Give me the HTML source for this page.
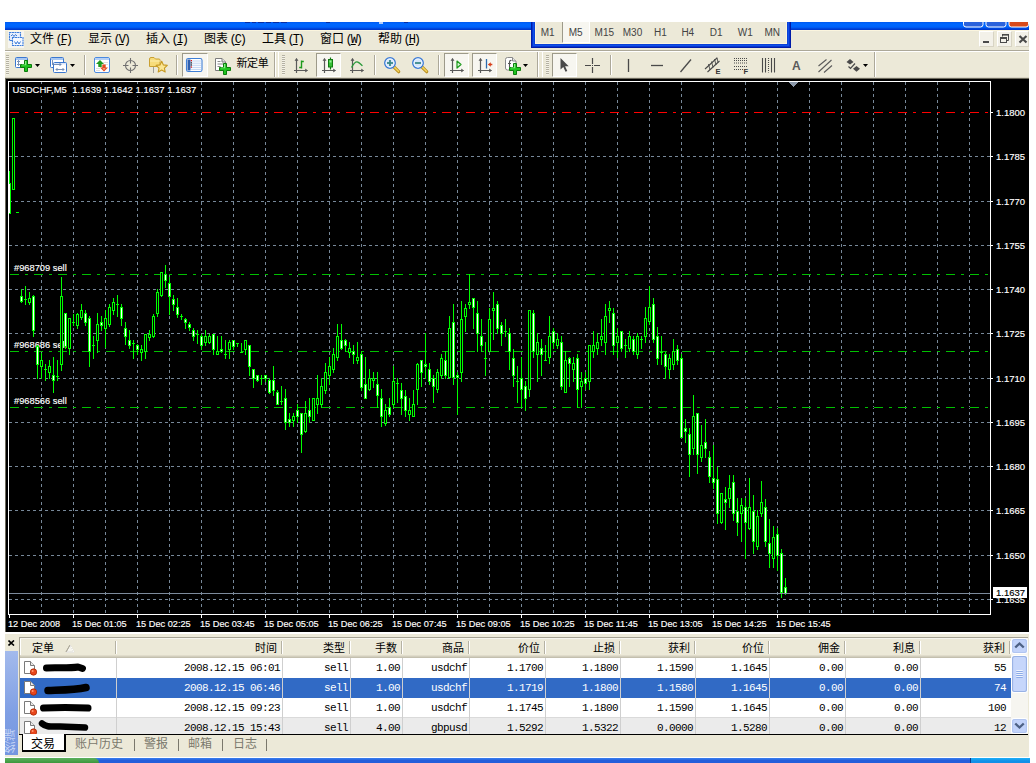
<!DOCTYPE html>
<html lang="zh-CN">
<head>
<meta charset="utf-8">
<title>MetaTrader 4 - USDCHF,M5</title>
<style>
html,body{margin:0;padding:0;background:#fff;}
body{width:1036px;height:763px;position:relative;overflow:hidden;font-family:"Liberation Sans","Noto Sans CJK SC",sans-serif;}
.abs{position:absolute;}
#win{position:absolute;left:5px;top:22px;width:1024px;height:735px;background:#ece9d8;}
#title{position:absolute;left:5px;top:22px;width:1024px;height:8px;background:linear-gradient(to bottom,#0058ee 0,#0064fc 18%,#0068ff 35%,#0064fb 55%,#005af2 70%,#0046dc 82%,#0034c8 100%);}
#menubar{position:absolute;left:5px;top:30px;width:1024px;height:20px;background:#ece9d8;}
.mi{position:absolute;top:32.3px;height:14px;line-height:14px;font-size:12px;color:#000;white-space:nowrap;font-family:"Liberation Sans","Noto Sans CJK SC",sans-serif;}
.mi b{font-weight:normal;font-family:"Liberation Mono",monospace;font-size:12px;letter-spacing:-2.1px;margin-left:1.5px;}
.mi u{text-decoration:underline;}
#tfbar{position:absolute;left:531px;top:10px;width:260px;height:38px;background:#ece9d8;box-shadow:inset 0 0 0 1px #001ba8,inset 0 0 0 2px #0634d0,inset 0 0 0 3px #0f50e8,inset 0 0 0 4px #0a40d8,inset 0 0 0 5px #fbf5de;}
.tf{position:absolute;top:25px;height:15px;line-height:15px;font-size:10px;color:#444;text-align:center;width:28px;}
#toolbar{position:absolute;left:5px;top:52px;width:1024px;height:26px;background:#ece9d8;}
.sep{position:absolute;top:55px;width:1px;height:20px;background:#aca899;border-right:1px solid #fff;}
.grip{position:absolute;top:55px;width:3px;height:20px;background:repeating-linear-gradient(#b4b1a2 0,#b4b1a2 1px,#f4f2e8 1px,#f4f2e8 2px);}
.pressed{position:absolute;top:53px;height:24px;background:#f7f6f0;border:1px solid #fff;border-top-color:#9d9a8a;border-left-color:#9d9a8a;box-sizing:border-box;}
svg text.ax{font-family:"Liberation Sans",sans-serif;font-size:9.5px;fill:#fff;stroke:#fff;stroke-width:0.15px;}
#term{position:absolute;left:5px;top:636px;width:1024px;height:121px;background:#ece9d8;}
.th{position:absolute;top:639px;height:18px;line-height:18px;font-size:11px;color:#000;text-align:right;box-sizing:border-box;padding-right:5px;white-space:nowrap;}
.td{position:absolute;height:20px;line-height:21px;font-size:11px;letter-spacing:-0.6px;font-family:"Liberation Mono",monospace;color:#000;text-align:right;box-sizing:border-box;padding-right:7px;white-space:nowrap;}
.row{position:absolute;left:19px;width:992px;height:20px;}
.tab{position:absolute;top:736px;font-size:12px;line-height:16px;color:#7a786c;white-space:nowrap;}
</style>
</head>
<body>
<div id="win"></div>
<div id="title"></div>
<div id="menubar"></div>
<div class="abs" style="left:5px;top:30px;width:1024px;height:1px;background:#fbf5de"></div>
<div class="abs" style="left:5px;top:50px;width:1024px;height:1px;background:#aca899"></div>
<div class="abs" style="left:5px;top:51px;width:1024px;height:1px;background:#fff"></div>
<div class="abs" style="left:5px;top:77px;width:1024px;height:1px;background:#8f8c7f"></div>
<div class="mi" style="left:30px">文件<b>(<u>F</u>)</b></div>
<div class="mi" style="left:88px">显示<b>(<u>V</u>)</b></div>
<div class="mi" style="left:146px">插入<b>(<u>I</u>)</b></div>
<div class="mi" style="left:204px">图表<b>(<u>C</u>)</b></div>
<div class="mi" style="left:262px">工具<b>(<u>T</u>)</b></div>
<div class="mi" style="left:320px">窗口<b>(<u>W</u>)</b></div>
<div class="mi" style="left:378px">帮助<b>(<u>H</u>)</b></div>
<div id="tfbar"></div>
<div class="abs" style="left:562px;top:20px;width:28px;height:23px;background:#f7f6f0;border:1px solid #fff;border-left-color:#9d9a8a;border-top-color:#9d9a8a;box-sizing:border-box"></div>
<div class="tf" style="left:533.6px">M1</div>
<div class="tf" style="left:561.7px">M5</div>
<div class="tf" style="left:590.3px">M15</div>
<div class="tf" style="left:618.5px">M30</div>
<div class="tf" style="left:646.5px">H1</div>
<div class="tf" style="left:673.8px">H4</div>
<div class="tf" style="left:702.2px">D1</div>
<div class="tf" style="left:731.3px">W1</div>
<div class="tf" style="left:758.2px">MN</div>
<div class="pressed" style="left:182px;width:26px"></div>
<div class="pressed" style="left:316px;width:25px"></div>
<div class="pressed" style="left:444px;width:25px"></div>
<div class="pressed" style="left:472px;width:25px"></div>
<div class="pressed" style="left:552px;width:25px"></div>
<div class="sep" style="left:84px"></div>
<div class="sep" style="left:176px"></div>
<div class="sep" style="left:374px"></div>
<div class="sep" style="left:438px"></div>
<div class="sep" style="left:610px"></div>
<div class="abs" style="left:274px;top:52px;width:1px;height:25px;background:#aca899"></div><div class="abs" style="left:275px;top:52px;width:1px;height:25px;background:#fff"></div>
<div class="abs" style="left:537px;top:52px;width:1px;height:25px;background:#aca899"></div><div class="abs" style="left:538px;top:52px;width:1px;height:25px;background:#fff"></div>
<div class="abs" style="left:874px;top:52px;width:1px;height:25px;background:#aca899"></div><div class="abs" style="left:875px;top:52px;width:1px;height:25px;background:#fff"></div>
<div class="abs" style="left:278px;top:52px;width:1px;height:25px;background:#fff"></div>
<div class="abs" style="left:542px;top:52px;width:1px;height:25px;background:#fff"></div>
<div class="grip" style="left:6px"></div>
<div class="grip" style="left:282px"></div>
<div class="grip" style="left:546px"></div>
<div class="abs" style="left:236.5px;top:56px;font-size:11px;line-height:14px;color:#000;font-weight:400;letter-spacing:-0.4px;white-space:nowrap">新定单</div>
<div class="abs" style="left:979px;top:31px;width:15px;height:16px;background:#f3f1e9;border-left:1px solid #fff;border-top:1px solid #fff;border-right:1px solid #d8d4c4;border-bottom:1px solid #d8d4c4;box-sizing:border-box"></div>
<div class="abs" style="left:997px;top:31px;width:15px;height:16px;background:#f3f1e9;border-left:1px solid #fff;border-top:1px solid #fff;border-right:1px solid #d8d4c4;border-bottom:1px solid #d8d4c4;box-sizing:border-box"></div>
<div class="abs" style="left:1015px;top:31px;width:14px;height:16px;background:#f3f1e9;border-left:1px solid #fff;border-top:1px solid #fff;border-right:1px solid #d8d4c4;border-bottom:1px solid #d8d4c4;box-sizing:border-box"></div>
<svg class="abs" style="left:0;top:0" width="1036" height="763" viewBox="0 0 1036 763">
<defs><linearGradient id="gp" x1="0" y1="0" x2="0" y2="1"><stop offset="0" stop-color="#6be86b"/><stop offset="1" stop-color="#0a9a0a"/></linearGradient></defs>
<rect x="963.5" y="19" width="19.5" height="8" rx="2.5" fill="#2a62dc" stroke="#fff" stroke-width="1"/>
<rect x="986" y="19" width="20" height="8" rx="2.5" fill="#2a62dc" stroke="#fff" stroke-width="1"/>
<rect x="1009" y="19" width="19.5" height="8" rx="2.5" fill="#d84a1a" stroke="#fff" stroke-width="1"/>
<rect x="0" y="0" width="1036" height="22" fill="#fff"/><rect x="1029" y="0" width="7" height="60" fill="#fff"/>
<path d="M245 22.5 h5 M252 22.5 h4 M258 22.5 h6 M266 22.5 h5 M273 22.5 h6 M281 22.5 h6 M326 22.5 h4 M404 22.5 h4" stroke="#0a1f8a" stroke-width="1" opacity="0.75"/><rect x="379" y="22" width="4" height="2" fill="#dfe8fb" opacity="0.8"/>
<rect x="983" y="41" width="6" height="2" fill="#4a4a4a"/>
<path d="M1002.5 36.5 v-2 h6 v6 h-2" fill="none" stroke="#4a4a4a" stroke-width="1"/><rect x="1002" y="34" width="7" height="1.6" fill="#4a4a4a"/>
<rect x="1000.5" y="37.5" width="6" height="5" fill="none" stroke="#4a4a4a" stroke-width="1"/><rect x="1000" y="37" width="7" height="2" fill="#4a4a4a"/>
<path d="M1019.5 36 L1026.5 42.5 M1026.5 36 L1019.5 42.5" stroke="#4a4a4a" stroke-width="2.2" fill="none"/>
<rect x="8" y="31" width="16" height="17" fill="#f6f5f0"/>
<rect x="9.5" y="32.5" width="11" height="8" fill="#e8f0fc" stroke="#3f7fdc" stroke-width="1.1" stroke-dasharray="2 0.5"/>
<rect x="12.5" y="37.5" width="10.5" height="8" fill="#f4f8ff" stroke="#3f7fdc" stroke-width="1.1" stroke-dasharray="2 0.5"/>
<path d="M11 36 l1.5 -1.5 l1.5 2 l1.5 -2 l1.5 1.5" fill="none" stroke="#3a7ad8" stroke-width="1"/>
<path d="M14.5 41.5 l1.5 2.5 l1.5 -2.5 l1.5 2.5 l1.5 -2.5" fill="none" stroke="#3a7ad8" stroke-width="1"/>
<rect x="15.5" y="57.5" width="12" height="10" rx="1" fill="#fff" stroke="#3b78d0"/><rect x="16" y="58" width="11" height="2" fill="#a9c8f2"/>
<path d="M18.5 60.5 v5 M17 62 l1.5 -1.5 l1.5 1.5 M17 64 l1.5 1.5 l1.5 -1.5" fill="none" stroke="#6a86b0" stroke-width="0.9"/>
<path d="M24.5 60.5 h3 v4 h4 v3 h-4 v4 h-3 v-4 h-4 v-3 h4 z" fill="#1fc41f" stroke="#0c7c0c" stroke-width="1" stroke-linejoin="round"/><path d="M25 61 h1.2 v4.2 h-4.4 v-0.7 h3.2 z" fill="#8ff58f" opacity="0.9"/>
<path d="M35 64 h5 l-2.5 3 z" fill="#000"/>
<rect x="50.5" y="57.5" width="13" height="10" rx="1" fill="#fff" stroke="#3b78d0"/><rect x="51" y="58" width="12" height="2" fill="#a9c8f2"/>
<rect x="53.5" y="62.5" width="13" height="10" rx="1" fill="#fff" stroke="#3b78d0"/><rect x="54" y="63" width="12" height="1.5" fill="#dbe8fa"/>
<path d="M52.5 60 v5 M53 64.5 h8 M59.5 63 l1.5 1.5 l-1.5 1.5" fill="none" stroke="#6a86b0" stroke-width="0.9"/>
<path d="M56 69.5 h8 M57.5 68 l-1.5 1.5 l1.5 1.5 M62.5 68 l1.5 1.5 l-1.5 1.5" fill="none" stroke="#6a86b0" stroke-width="0.9"/>
<path d="M70 64 h5 l-2.5 3 z" fill="#000"/>
<rect x="94.500" y="57.500" width="15" height="15" rx="1.5" fill="#fff" stroke="#4a8ae0"/><rect x="95" y="58" width="14" height="2" fill="#b5d0f5"/>
<path d="M103 62.500 h5 M103 64.500 h5 M96 68.500 h4 M96 70.500 h4" stroke="#d8d8d8" stroke-width="0.8"/>
<path d="M100 60 l4 4 h-2.300 v3 h-3.400 v-3 h-2.300 z" fill="#1f9a1f"/>
<path d="M104 71.500 l-4 -4 h2.300 v-3 h3.400 v3 h2.300 z" fill="#e2491c"/><path d="M104 70 l-1.600 -1.800 h3.200 z" fill="#f6b79c"/>
<circle cx="130.500" cy="65.500" r="5" fill="none" stroke="#707070" stroke-width="1.1"/><path d="M130.500 58 v5.500 M130.500 67.500 v5.500 M123 65.500 h5.500 M132.500 65.500 h5.500" stroke="#707070" stroke-width="1.1"/>
<path d="M149.500 59 q0 -1.500 1.500 -1.500 h3 l1.500 1.500 h3.500 q1 0 1 1 v6.500 h-10.500 z" fill="#f7dc7a" stroke="#c9a033" stroke-width="1"/><path d="M150 61 h10" stroke="#fbeeb0" stroke-width="1"/>
<path d="M153.500 67.500 v5.500" stroke="#555" stroke-width="1" stroke-dasharray="1 1"/>
<path d="M161.700 61.300 l1.700 3.600 l3.900 0.500 l-2.900 2.700 l0.800 3.900 l-3.500 -1.900 l-3.500 1.900 l0.800 -3.900 l-2.900 -2.700 l3.900 -0.500 z" fill="#fbe694" stroke="#c79a22" stroke-width="1.100" stroke-linejoin="round"/>
<rect x="186.500" y="58.500" width="15.500" height="13" rx="1.8" fill="#fff" stroke="#3f7fd6" stroke-width="1.1"/><rect x="187.500" y="59.500" width="3" height="11" fill="#2f5fae"/>
<path d="M191 61 h10 M191 63.200 h10 M191 65.300 h10 M191 67.400 h10 M191 69.400 h10" stroke="#a8c4ee" stroke-width="0.700"/>
<rect x="190.700" y="60" width="1.300" height="1.300" fill="#e0201c"/><rect x="190.700" y="62.200" width="1.300" height="1.300" fill="#333"/><rect x="190.700" y="64.300" width="1.300" height="1.300" fill="#333"/><rect x="190.700" y="66.400" width="1.300" height="1.300" fill="#e0201c"/>
<path d="M215.500 58.500 h6.500 l3.500 3.500 v8.500 h-10 z" fill="#fff" stroke="#7c7c7c"/><path d="M222 58.500 v3.500 h3.500" fill="#e4e4e4" stroke="#7c7c7c"/><path d="M217.500 61.500 h3 M217.500 64 h6 M217.500 66.500 h3" stroke="#8a8a8a" stroke-width="1"/>
<path d="M223.5 63.5 h3 v4 h4 v3 h-4 v4 h-3 v-4 h-4 v-3 h4 z" fill="#1fc41f" stroke="#0c7c0c" stroke-width="1" stroke-linejoin="round"/><path d="M224 64 h1.2 v4.2 h-4.4 v-0.7 h3.2 z" fill="#8ff58f" opacity="0.9"/>
<path d="M296.5 58.500 V73 M294 70.5 H307.5" stroke="#5a5a5a" stroke-width="1.200" fill="none"/><path d="M295 60.5 l1.5 -2 l1.5 2 z M305.5 69.0 l2 1.5 l-2 1.5 z" stroke="#5a5a5a" stroke-width="0.6" fill="#5a5a5a"/>
<path d="M301.500 67.500 h-2.300 M301.500 60.500 V68.500 M301.500 61.500 h2.300" stroke="#1d9a1d" stroke-width="1.400" fill="none"/>
<path d="M324.5 58.500 V73 M322 70.5 H335.5" stroke="#5a5a5a" stroke-width="1.200" fill="none"/><path d="M323 60.5 l1.5 -2 l1.5 2 z M333.5 69.0 l2 1.5 l-2 1.5 z" stroke="#5a5a5a" stroke-width="0.6" fill="#5a5a5a"/>
<rect x="328.500" y="59.500" width="4" height="7.500" fill="#35c035" stroke="#127a12" stroke-width="1"/><path d="M330.500 57.500 v2 M330.500 67 v2.500" stroke="#127a12" stroke-width="1.200"/><rect x="329.500" y="60.500" width="2" height="2" fill="#9aee9a"/>
<path d="M352.5 58.500 V73 M350 70.5 H363.5" stroke="#5a5a5a" stroke-width="1.200" fill="none"/><path d="M351 60.5 l1.5 -2 l1.5 2 z M361.5 69.0 l2 1.5 l-2 1.5 z" stroke="#5a5a5a" stroke-width="0.6" fill="#5a5a5a"/>
<path d="M351.500 67.500 C354 63,356 61.500,357.500 62 C359.500 62.500,361 64.500,362.500 65.800" stroke="#2a9a3a" stroke-width="1.300" fill="none"/>
<path d="M393.5 66.5 L398.7 71.7" stroke="#b98f1f" stroke-width="3.200" stroke-linecap="round"/><path d="M393.8 66.6 L398.5 71.3" stroke="#f3d25a" stroke-width="1.600" stroke-linecap="round"/><circle cx="390" cy="63" r="5.300" fill="#d5e6fb" stroke="#3b7ad6" stroke-width="1.300"/><circle cx="390" cy="63" r="4" fill="none" stroke="#eef5fe" stroke-width="0.800"/><path d="M387 63 h6" stroke="#3a8a8a" stroke-width="1.800"/><path d="M390 60 v6" stroke="#3a8a8a" stroke-width="1.800"/>
<path d="M421.5 66.5 L426.7 71.7" stroke="#b98f1f" stroke-width="3.200" stroke-linecap="round"/><path d="M421.8 66.6 L426.5 71.3" stroke="#f3d25a" stroke-width="1.600" stroke-linecap="round"/><circle cx="418" cy="63" r="5.300" fill="#d5e6fb" stroke="#3b7ad6" stroke-width="1.300"/><circle cx="418" cy="63" r="4" fill="none" stroke="#eef5fe" stroke-width="0.800"/><path d="M415 63 h6" stroke="#3a8a8a" stroke-width="1.800"/>
<path d="M452.5 58.500 V73 M450 70.5 H463.5" stroke="#5a5a5a" stroke-width="1.200" fill="none"/><path d="M451 60.5 l1.5 -2 l1.5 2 z M461.5 69.0 l2 1.5 l-2 1.5 z" stroke="#5a5a5a" stroke-width="0.6" fill="#5a5a5a"/>
<path d="M457 61 l4 3.500 l-4 3.500 z" fill="#d8f5d8" stroke="#1d9a1d" stroke-width="1.200" stroke-linejoin="round"/>
<path d="M480.5 58.500 V73 M478 70.5 H491.5" stroke="#5a5a5a" stroke-width="1.200" fill="none"/><path d="M479 60.5 l1.5 -2 l1.5 2 z M489.5 69.0 l2 1.5 l-2 1.5 z" stroke="#5a5a5a" stroke-width="0.6" fill="#5a5a5a"/>
<path d="M486.500 59 v9.500" stroke="#2a6ab0" stroke-width="1.300"/><path d="M487.800 64.500 l3 -2.300 v1.600 h1.500 v1.400 h-1.500 v1.600 z" fill="#d8401c"/>
<path d="M505.500 59.500 q0 -2 2 -2 h5 l3.500 3.500 v7 q0 2 -2 2 h-6.500 q-2 0 -2 -2 z" fill="#fff" stroke="#8a8a8a"/><path d="M512.500 57.500 v3.500 h3.500" fill="#e6e6e6" stroke="#8a8a8a"/>
<path d="M511.500 60.500 q-2 -0.500 -2 2 v5 M508 63.500 h3" fill="none" stroke="#555" stroke-width="1.100"/>
<path d="M513.5 63.5 h3 v4 h4 v3 h-4 v4 h-3 v-4 h-4 v-3 h4 z" fill="#1fc41f" stroke="#0c7c0c" stroke-width="1" stroke-linejoin="round"/><path d="M514 64 h1.2 v4.2 h-4.4 v-0.7 h3.2 z" fill="#8ff58f" opacity="0.9"/>
<path d="M523 64 h5 l-2.5 3 z" fill="#000"/>
<path d="M560.500 58 v11.500 l2.800 -2.600 l2.200 4.800 l1.800 -0.800 l-2.200 -4.700 h3.600 z" fill="#4a4a4a"/>
<path d="M592.500 58 v6 M592.500 67 v6 M585 65.500 h6 M594 65.500 h6" stroke="#4a4a4a" stroke-width="1.200"/><rect x="592" y="65" width="1" height="1" fill="#4a4a4a"/>
<path d="M628.500 59 v13" stroke="#4a4a4a" stroke-width="1.300"/>
<path d="M651 65.500 h12" stroke="#4a4a4a" stroke-width="1.300"/>
<path d="M680.500 72 L691 59.500" stroke="#4a4a4a" stroke-width="1.300"/>
<path d="M705 69 L717 58 M707.500 72 L719.500 61" stroke="#4a4a4a" stroke-width="1.100"/><path d="M708.500 64 l1.500 6 M711.500 61.500 l1.500 6 M714.500 59 l1.500 6 M717 57.500 l1 5" stroke="#4a4a4a" stroke-width="0.900"/>
<text x="715.500" y="74" font-family="Liberation Sans,sans-serif" font-size="7.5" font-weight="bold" fill="#333">E</text>
<path d="M734 58.5 h13" stroke="#4a4a4a" stroke-width="1" stroke-dasharray="1 1"/>
<path d="M734 60.5 h13" stroke="#4a4a4a" stroke-width="1" stroke-dasharray="1 1"/>
<path d="M734 63 h13" stroke="#4a4a4a" stroke-width="1" stroke-dasharray="1 1"/>
<path d="M734 66.5 h13" stroke="#4a4a4a" stroke-width="1" stroke-dasharray="1 1"/>
<path d="M734 69.5 h9" stroke="#4a4a4a" stroke-width="1" stroke-dasharray="1 1"/>
<text x="743.500" y="74" font-family="Liberation Sans,sans-serif" font-size="7.5" font-weight="bold" fill="#333">F</text>
<path d="M762.5 58 v14.500" stroke="#4a4a4a" stroke-width="1.100"/>
<path d="M765.5 58 v14.500" stroke="#4a4a4a" stroke-width="1.100"/>
<path d="M768.5 58 v14.500" stroke="#4a4a4a" stroke-width="1.100" stroke-dasharray="1 1"/>
<path d="M771.5 58 v14.500" stroke="#4a4a4a" stroke-width="1.100"/>
<path d="M774.5 58 v14.500" stroke="#4a4a4a" stroke-width="1.100"/>
<text x="792" y="70" font-family="Liberation Sans,sans-serif" font-size="12" font-weight="bold" fill="#5a5a5a">A</text>
<path d="M818.500 66 L826.500 59.500 M818.500 72 L831.500 60 M824 72.500 L832 65.500" stroke="#5a5a5a" stroke-width="1.100"/>
<path d="M850 59 l3.500 3 l-3.500 2.500 l-3.500 -2.500 z" fill="#4a4a4a"/><path d="M856.500 66 l3.500 2.800 l-3.500 3 l-3.500 -3 z" fill="#4a4a4a"/><path d="M848.500 66.500 l2 2 l4.500 -5" fill="none" stroke="#4a4a4a" stroke-width="1.200"/>
<path d="M863 64 h5 l-2.5 3 z" fill="#000"/>
</svg>
<svg class="abs" style="left:0;top:0" width="1036" height="763" viewBox="0 0 1036 763" shape-rendering="crispEdges">
<rect x="5" y="77" width="1024" height="1" fill="#d8d4c4"/>
<rect x="5" y="78" width="1024" height="554" fill="#6d6a5d"/>
<rect x="6" y="79" width="1023" height="553" fill="#000"/>
<line x1="41.5" y1="82" x2="41.5" y2="614" stroke="#778899" stroke-width="1" stroke-dasharray="3 3" stroke-dashoffset="0"/>
<line x1="73.5" y1="82" x2="73.5" y2="614" stroke="#778899" stroke-width="1" stroke-dasharray="3 3" stroke-dashoffset="0"/>
<line x1="105.5" y1="82" x2="105.5" y2="614" stroke="#778899" stroke-width="1" stroke-dasharray="3 3" stroke-dashoffset="0"/>
<line x1="137.5" y1="82" x2="137.5" y2="614" stroke="#778899" stroke-width="1" stroke-dasharray="3 3" stroke-dashoffset="0"/>
<line x1="169.5" y1="82" x2="169.5" y2="614" stroke="#778899" stroke-width="1" stroke-dasharray="3 3" stroke-dashoffset="0"/>
<line x1="201.5" y1="82" x2="201.5" y2="614" stroke="#778899" stroke-width="1" stroke-dasharray="3 3" stroke-dashoffset="0"/>
<line x1="233.5" y1="82" x2="233.5" y2="614" stroke="#778899" stroke-width="1" stroke-dasharray="3 3" stroke-dashoffset="0"/>
<line x1="265.5" y1="82" x2="265.5" y2="614" stroke="#778899" stroke-width="1" stroke-dasharray="3 3" stroke-dashoffset="0"/>
<line x1="297.5" y1="82" x2="297.5" y2="614" stroke="#778899" stroke-width="1" stroke-dasharray="3 3" stroke-dashoffset="0"/>
<line x1="329.5" y1="82" x2="329.5" y2="614" stroke="#778899" stroke-width="1" stroke-dasharray="3 3" stroke-dashoffset="0"/>
<line x1="361.5" y1="82" x2="361.5" y2="614" stroke="#778899" stroke-width="1" stroke-dasharray="3 3" stroke-dashoffset="0"/>
<line x1="393.5" y1="82" x2="393.5" y2="614" stroke="#778899" stroke-width="1" stroke-dasharray="3 3" stroke-dashoffset="0"/>
<line x1="425.5" y1="82" x2="425.5" y2="614" stroke="#778899" stroke-width="1" stroke-dasharray="3 3" stroke-dashoffset="0"/>
<line x1="457.5" y1="82" x2="457.5" y2="614" stroke="#778899" stroke-width="1" stroke-dasharray="3 3" stroke-dashoffset="0"/>
<line x1="489.5" y1="82" x2="489.5" y2="614" stroke="#778899" stroke-width="1" stroke-dasharray="3 3" stroke-dashoffset="0"/>
<line x1="521.5" y1="82" x2="521.5" y2="614" stroke="#778899" stroke-width="1" stroke-dasharray="3 3" stroke-dashoffset="0"/>
<line x1="553.5" y1="82" x2="553.5" y2="614" stroke="#778899" stroke-width="1" stroke-dasharray="3 3" stroke-dashoffset="0"/>
<line x1="585.5" y1="82" x2="585.5" y2="614" stroke="#778899" stroke-width="1" stroke-dasharray="3 3" stroke-dashoffset="0"/>
<line x1="617.5" y1="82" x2="617.5" y2="614" stroke="#778899" stroke-width="1" stroke-dasharray="3 3" stroke-dashoffset="0"/>
<line x1="649.5" y1="82" x2="649.5" y2="614" stroke="#778899" stroke-width="1" stroke-dasharray="3 3" stroke-dashoffset="0"/>
<line x1="681.5" y1="82" x2="681.5" y2="614" stroke="#778899" stroke-width="1" stroke-dasharray="3 3" stroke-dashoffset="0"/>
<line x1="713.5" y1="82" x2="713.5" y2="614" stroke="#778899" stroke-width="1" stroke-dasharray="3 3" stroke-dashoffset="0"/>
<line x1="745.5" y1="82" x2="745.5" y2="614" stroke="#778899" stroke-width="1" stroke-dasharray="3 3" stroke-dashoffset="0"/>
<line x1="777.5" y1="82" x2="777.5" y2="614" stroke="#778899" stroke-width="1" stroke-dasharray="3 3" stroke-dashoffset="0"/>
<line x1="809.5" y1="82" x2="809.5" y2="614" stroke="#778899" stroke-width="1" stroke-dasharray="3 3" stroke-dashoffset="0"/>
<line x1="841.5" y1="82" x2="841.5" y2="614" stroke="#778899" stroke-width="1" stroke-dasharray="3 3" stroke-dashoffset="0"/>
<line x1="873.5" y1="82" x2="873.5" y2="614" stroke="#778899" stroke-width="1" stroke-dasharray="3 3" stroke-dashoffset="0"/>
<line x1="905.5" y1="82" x2="905.5" y2="614" stroke="#778899" stroke-width="1" stroke-dasharray="3 3" stroke-dashoffset="0"/>
<line x1="937.5" y1="82" x2="937.5" y2="614" stroke="#778899" stroke-width="1" stroke-dasharray="3 3" stroke-dashoffset="0"/>
<line x1="969.5" y1="82" x2="969.5" y2="614" stroke="#778899" stroke-width="1" stroke-dasharray="3 3" stroke-dashoffset="0"/>
<line x1="9" y1="599.5" x2="990" y2="599.5" stroke="#778899" stroke-width="1" stroke-dasharray="3 3"/>
<line x1="9" y1="555.5" x2="990" y2="555.5" stroke="#778899" stroke-width="1" stroke-dasharray="3 3"/>
<line x1="9" y1="510.5" x2="990" y2="510.5" stroke="#778899" stroke-width="1" stroke-dasharray="3 3"/>
<line x1="9" y1="466.5" x2="990" y2="466.5" stroke="#778899" stroke-width="1" stroke-dasharray="3 3"/>
<line x1="9" y1="422.5" x2="990" y2="422.5" stroke="#778899" stroke-width="1" stroke-dasharray="3 3"/>
<line x1="9" y1="378.5" x2="990" y2="378.5" stroke="#778899" stroke-width="1" stroke-dasharray="3 3"/>
<line x1="9" y1="333.5" x2="990" y2="333.5" stroke="#778899" stroke-width="1" stroke-dasharray="3 3"/>
<line x1="9" y1="289.5" x2="990" y2="289.5" stroke="#778899" stroke-width="1" stroke-dasharray="3 3"/>
<line x1="9" y1="245.5" x2="990" y2="245.5" stroke="#778899" stroke-width="1" stroke-dasharray="3 3"/>
<line x1="9" y1="201.5" x2="990" y2="201.5" stroke="#778899" stroke-width="1" stroke-dasharray="3 3"/>
<line x1="9" y1="156.5" x2="990" y2="156.5" stroke="#778899" stroke-width="1" stroke-dasharray="3 3"/>
<rect x="8" y="81" width="983" height="1" fill="#fff"/>
<rect x="8" y="614" width="983" height="1" fill="#fff"/>
<rect x="8" y="81" width="1" height="534" fill="#fff"/>
<rect x="990" y="81" width="1" height="534" fill="#fff"/>
<rect x="9" y="112" width="981" height="1" fill="#000"/><line x1="10" y1="112.5" x2="990" y2="112.5" stroke="#ff0000" stroke-width="1" stroke-dasharray="9 6 3 6"/>
<rect x="9" y="274" width="981" height="1" fill="#000"/><line x1="10" y1="274.5" x2="990" y2="274.5" stroke="#00c000" stroke-width="1" stroke-dasharray="9 6 3 6"/>
<rect x="9" y="351" width="981" height="1" fill="#000"/><line x1="10" y1="351.5" x2="990" y2="351.5" stroke="#00c000" stroke-width="1" stroke-dasharray="9 6 3 6"/>
<rect x="9" y="407" width="981" height="1" fill="#000"/><line x1="10" y1="407.5" x2="990" y2="407.5" stroke="#00c000" stroke-width="1" stroke-dasharray="9 6 3 6"/>
<text x="14" y="271.3" class="ax" style="font-size:9.3px">#968709 sell</text>
<text x="14" y="348.3" class="ax" style="font-size:9.3px">#968686 sell</text>
<text x="14" y="404.3" class="ax" style="font-size:9.3px">#968566 sell</text>
<rect x="9" y="171" width="1" height="43" fill="#00ff00"/>
<rect x="9" y="183" width="2" height="31" fill="#00ff00"/>
<rect x="9" y="184" width="1" height="29" fill="#fff"/>
<rect x="13" y="118" width="1" height="72" fill="#00ff00"/>
<rect x="12" y="118" width="3" height="72" fill="#00ff00"/>
<rect x="13" y="119" width="1" height="70" fill="#000"/>
<rect x="17" y="212" width="1" height="1" fill="#00ff00"/>
<rect x="16" y="212" width="3" height="1" fill="#00ff00"/>
<rect x="21" y="289" width="1" height="14" fill="#00ff00"/>
<rect x="20" y="296" width="3" height="6" fill="#00ff00"/>
<rect x="21" y="297" width="1" height="4" fill="#fff"/>
<rect x="25" y="286" width="1" height="19" fill="#00ff00"/>
<rect x="24" y="299" width="3" height="1" fill="#00ff00"/>
<rect x="29" y="292" width="1" height="13" fill="#00ff00"/>
<rect x="28" y="298" width="3" height="5" fill="#00ff00"/>
<rect x="29" y="299" width="1" height="3" fill="#000"/>
<rect x="33" y="295" width="1" height="42" fill="#00ff00"/>
<rect x="32" y="296" width="3" height="35" fill="#00ff00"/>
<rect x="33" y="297" width="1" height="33" fill="#fff"/>
<rect x="37" y="345" width="1" height="34" fill="#00ff00"/>
<rect x="36" y="346" width="3" height="19" fill="#00ff00"/>
<rect x="37" y="347" width="1" height="17" fill="#fff"/>
<rect x="41" y="353" width="1" height="26" fill="#00ff00"/>
<rect x="40" y="360" width="3" height="7" fill="#00ff00"/>
<rect x="41" y="361" width="1" height="5" fill="#000"/>
<rect x="45" y="364" width="1" height="17" fill="#00ff00"/>
<rect x="44" y="369" width="3" height="1" fill="#00ff00"/>
<rect x="49" y="360" width="1" height="19" fill="#00ff00"/>
<rect x="48" y="366" width="3" height="7" fill="#00ff00"/>
<rect x="49" y="367" width="1" height="5" fill="#000"/>
<rect x="53" y="357" width="1" height="36" fill="#00ff00"/>
<rect x="52" y="375" width="3" height="6" fill="#00ff00"/>
<rect x="53" y="376" width="1" height="4" fill="#fff"/>
<rect x="57" y="360" width="1" height="21" fill="#00ff00"/>
<rect x="56" y="376" width="3" height="1" fill="#00ff00"/>
<rect x="61" y="277" width="1" height="94" fill="#00ff00"/>
<rect x="60" y="296" width="3" height="69" fill="#00ff00"/>
<rect x="61" y="297" width="1" height="67" fill="#000"/>
<rect x="65" y="313" width="1" height="36" fill="#00ff00"/>
<rect x="64" y="313" width="3" height="34" fill="#00ff00"/>
<rect x="65" y="314" width="1" height="32" fill="#fff"/>
<rect x="69" y="318" width="1" height="37" fill="#00ff00"/>
<rect x="68" y="318" width="3" height="31" fill="#00ff00"/>
<rect x="69" y="319" width="1" height="29" fill="#000"/>
<rect x="73" y="314" width="1" height="12" fill="#00ff00"/>
<rect x="72" y="322" width="3" height="1" fill="#00ff00"/>
<rect x="77" y="313" width="1" height="16" fill="#00ff00"/>
<rect x="76" y="314" width="3" height="12" fill="#00ff00"/>
<rect x="77" y="315" width="1" height="10" fill="#000"/>
<rect x="81" y="304" width="1" height="16" fill="#00ff00"/>
<rect x="80" y="310" width="3" height="8" fill="#00ff00"/>
<rect x="81" y="311" width="1" height="6" fill="#000"/>
<rect x="85" y="310" width="1" height="16" fill="#00ff00"/>
<rect x="84" y="313" width="3" height="10" fill="#00ff00"/>
<rect x="85" y="314" width="1" height="8" fill="#fff"/>
<rect x="89" y="316" width="1" height="51" fill="#00ff00"/>
<rect x="88" y="318" width="3" height="34" fill="#00ff00"/>
<rect x="89" y="319" width="1" height="32" fill="#fff"/>
<rect x="93" y="336" width="1" height="23" fill="#00ff00"/>
<rect x="92" y="345" width="3" height="1" fill="#00ff00"/>
<rect x="97" y="313" width="1" height="40" fill="#00ff00"/>
<rect x="96" y="324" width="3" height="17" fill="#00ff00"/>
<rect x="97" y="325" width="1" height="15" fill="#000"/>
<rect x="101" y="316" width="1" height="15" fill="#00ff00"/>
<rect x="100" y="322" width="3" height="4" fill="#00ff00"/>
<rect x="101" y="323" width="1" height="2" fill="#fff"/>
<rect x="105" y="310" width="1" height="38" fill="#00ff00"/>
<rect x="104" y="318" width="3" height="11" fill="#00ff00"/>
<rect x="105" y="319" width="1" height="9" fill="#000"/>
<rect x="109" y="304" width="1" height="23" fill="#00ff00"/>
<rect x="108" y="307" width="3" height="18" fill="#00ff00"/>
<rect x="109" y="308" width="1" height="16" fill="#000"/>
<rect x="113" y="298" width="1" height="17" fill="#00ff00"/>
<rect x="112" y="302" width="3" height="9" fill="#00ff00"/>
<rect x="113" y="303" width="1" height="7" fill="#000"/>
<rect x="117" y="295" width="1" height="22" fill="#00ff00"/>
<rect x="116" y="304" width="3" height="1" fill="#00ff00"/>
<rect x="121" y="304" width="1" height="22" fill="#00ff00"/>
<rect x="120" y="307" width="3" height="12" fill="#00ff00"/>
<rect x="121" y="308" width="1" height="10" fill="#fff"/>
<rect x="125" y="322" width="1" height="23" fill="#00ff00"/>
<rect x="124" y="328" width="3" height="9" fill="#00ff00"/>
<rect x="125" y="329" width="1" height="7" fill="#fff"/>
<rect x="129" y="330" width="1" height="19" fill="#00ff00"/>
<rect x="128" y="340" width="3" height="6" fill="#00ff00"/>
<rect x="129" y="341" width="1" height="4" fill="#fff"/>
<rect x="133" y="340" width="1" height="19" fill="#00ff00"/>
<rect x="132" y="343" width="3" height="1" fill="#00ff00"/>
<rect x="137" y="344" width="1" height="11" fill="#00ff00"/>
<rect x="136" y="345" width="3" height="5" fill="#00ff00"/>
<rect x="137" y="346" width="1" height="3" fill="#fff"/>
<rect x="141" y="345" width="1" height="16" fill="#00ff00"/>
<rect x="140" y="349" width="3" height="4" fill="#00ff00"/>
<rect x="141" y="350" width="1" height="2" fill="#000"/>
<rect x="145" y="334" width="1" height="25" fill="#00ff00"/>
<rect x="144" y="334" width="3" height="18" fill="#00ff00"/>
<rect x="145" y="335" width="1" height="16" fill="#000"/>
<rect x="149" y="330" width="1" height="11" fill="#00ff00"/>
<rect x="148" y="334" width="3" height="4" fill="#00ff00"/>
<rect x="149" y="335" width="1" height="2" fill="#000"/>
<rect x="153" y="314" width="1" height="24" fill="#00ff00"/>
<rect x="152" y="316" width="3" height="21" fill="#00ff00"/>
<rect x="153" y="317" width="1" height="19" fill="#000"/>
<rect x="157" y="289" width="1" height="28" fill="#00ff00"/>
<rect x="156" y="292" width="3" height="22" fill="#00ff00"/>
<rect x="157" y="293" width="1" height="20" fill="#000"/>
<rect x="161" y="272" width="1" height="25" fill="#00ff00"/>
<rect x="160" y="272" width="3" height="24" fill="#00ff00"/>
<rect x="161" y="273" width="1" height="22" fill="#000"/>
<rect x="165" y="265" width="1" height="23" fill="#00ff00"/>
<rect x="164" y="274" width="3" height="7" fill="#00ff00"/>
<rect x="165" y="275" width="1" height="5" fill="#fff"/>
<rect x="169" y="277" width="1" height="38" fill="#00ff00"/>
<rect x="168" y="283" width="3" height="14" fill="#00ff00"/>
<rect x="169" y="284" width="1" height="12" fill="#fff"/>
<rect x="173" y="295" width="1" height="16" fill="#00ff00"/>
<rect x="172" y="299" width="3" height="6" fill="#00ff00"/>
<rect x="173" y="300" width="1" height="4" fill="#fff"/>
<rect x="177" y="298" width="1" height="20" fill="#00ff00"/>
<rect x="176" y="307" width="3" height="8" fill="#00ff00"/>
<rect x="177" y="308" width="1" height="6" fill="#fff"/>
<rect x="181" y="314" width="1" height="6" fill="#00ff00"/>
<rect x="180" y="316" width="3" height="1" fill="#00ff00"/>
<rect x="185" y="318" width="1" height="11" fill="#00ff00"/>
<rect x="184" y="319" width="3" height="4" fill="#00ff00"/>
<rect x="185" y="320" width="1" height="2" fill="#fff"/>
<rect x="189" y="322" width="1" height="9" fill="#00ff00"/>
<rect x="188" y="324" width="3" height="4" fill="#00ff00"/>
<rect x="189" y="325" width="1" height="2" fill="#fff"/>
<rect x="193" y="328" width="1" height="13" fill="#00ff00"/>
<rect x="192" y="330" width="3" height="7" fill="#00ff00"/>
<rect x="193" y="331" width="1" height="5" fill="#fff"/>
<rect x="197" y="330" width="1" height="14" fill="#00ff00"/>
<rect x="196" y="334" width="3" height="1" fill="#00ff00"/>
<rect x="201" y="334" width="1" height="16" fill="#00ff00"/>
<rect x="200" y="336" width="3" height="10" fill="#00ff00"/>
<rect x="201" y="337" width="1" height="8" fill="#fff"/>
<rect x="205" y="330" width="1" height="16" fill="#00ff00"/>
<rect x="204" y="336" width="3" height="7" fill="#00ff00"/>
<rect x="205" y="337" width="1" height="5" fill="#000"/>
<rect x="209" y="334" width="1" height="10" fill="#00ff00"/>
<rect x="208" y="336" width="3" height="7" fill="#00ff00"/>
<rect x="209" y="337" width="1" height="5" fill="#000"/>
<rect x="213" y="334" width="1" height="21" fill="#00ff00"/>
<rect x="212" y="334" width="3" height="16" fill="#00ff00"/>
<rect x="213" y="335" width="1" height="14" fill="#fff"/>
<rect x="217" y="336" width="1" height="19" fill="#00ff00"/>
<rect x="216" y="351" width="3" height="4" fill="#00ff00"/>
<rect x="217" y="352" width="1" height="2" fill="#000"/>
<rect x="221" y="336" width="1" height="17" fill="#00ff00"/>
<rect x="220" y="349" width="3" height="3" fill="#00ff00"/>
<rect x="221" y="350" width="1" height="1" fill="#fff"/>
<rect x="225" y="340" width="1" height="19" fill="#00ff00"/>
<rect x="224" y="354" width="3" height="1" fill="#00ff00"/>
<rect x="229" y="340" width="1" height="19" fill="#00ff00"/>
<rect x="228" y="342" width="3" height="8" fill="#00ff00"/>
<rect x="229" y="343" width="1" height="6" fill="#000"/>
<rect x="233" y="340" width="1" height="10" fill="#00ff00"/>
<rect x="232" y="340" width="3" height="7" fill="#00ff00"/>
<rect x="233" y="341" width="1" height="5" fill="#fff"/>
<rect x="237" y="343" width="1" height="4" fill="#00ff00"/>
<rect x="236" y="343" width="3" height="1" fill="#00ff00"/>
<rect x="241" y="343" width="1" height="10" fill="#00ff00"/>
<rect x="240" y="352" width="3" height="1" fill="#00ff00"/>
<rect x="245" y="340" width="1" height="15" fill="#00ff00"/>
<rect x="244" y="340" width="3" height="10" fill="#00ff00"/>
<rect x="245" y="341" width="1" height="8" fill="#000"/>
<rect x="249" y="345" width="1" height="31" fill="#00ff00"/>
<rect x="248" y="345" width="3" height="22" fill="#00ff00"/>
<rect x="249" y="346" width="1" height="20" fill="#fff"/>
<rect x="253" y="369" width="1" height="19" fill="#00ff00"/>
<rect x="252" y="369" width="3" height="10" fill="#00ff00"/>
<rect x="253" y="370" width="1" height="8" fill="#fff"/>
<rect x="257" y="375" width="1" height="7" fill="#00ff00"/>
<rect x="256" y="375" width="3" height="6" fill="#00ff00"/>
<rect x="257" y="376" width="1" height="4" fill="#fff"/>
<rect x="261" y="375" width="1" height="10" fill="#00ff00"/>
<rect x="260" y="378" width="3" height="1" fill="#00ff00"/>
<rect x="265" y="375" width="1" height="7" fill="#00ff00"/>
<rect x="264" y="375" width="3" height="4" fill="#00ff00"/>
<rect x="265" y="376" width="1" height="2" fill="#fff"/>
<rect x="269" y="378" width="1" height="16" fill="#00ff00"/>
<rect x="268" y="380" width="3" height="13" fill="#00ff00"/>
<rect x="269" y="381" width="1" height="11" fill="#fff"/>
<rect x="273" y="366" width="1" height="30" fill="#00ff00"/>
<rect x="272" y="380" width="3" height="11" fill="#00ff00"/>
<rect x="273" y="381" width="1" height="9" fill="#fff"/>
<rect x="277" y="390" width="1" height="15" fill="#00ff00"/>
<rect x="276" y="392" width="3" height="13" fill="#00ff00"/>
<rect x="277" y="393" width="1" height="11" fill="#fff"/>
<rect x="281" y="386" width="1" height="19" fill="#00ff00"/>
<rect x="280" y="401" width="3" height="1" fill="#00ff00"/>
<rect x="285" y="389" width="1" height="41" fill="#00ff00"/>
<rect x="284" y="398" width="3" height="25" fill="#00ff00"/>
<rect x="285" y="399" width="1" height="23" fill="#fff"/>
<rect x="289" y="413" width="1" height="14" fill="#00ff00"/>
<rect x="288" y="419" width="3" height="4" fill="#00ff00"/>
<rect x="289" y="420" width="1" height="2" fill="#fff"/>
<rect x="293" y="413" width="1" height="14" fill="#00ff00"/>
<rect x="292" y="416" width="3" height="5" fill="#00ff00"/>
<rect x="293" y="417" width="1" height="3" fill="#000"/>
<rect x="297" y="404" width="1" height="19" fill="#00ff00"/>
<rect x="296" y="410" width="3" height="7" fill="#00ff00"/>
<rect x="297" y="411" width="1" height="5" fill="#fff"/>
<rect x="301" y="413" width="1" height="40" fill="#00ff00"/>
<rect x="300" y="413" width="3" height="22" fill="#00ff00"/>
<rect x="301" y="414" width="1" height="20" fill="#fff"/>
<rect x="305" y="401" width="1" height="32" fill="#00ff00"/>
<rect x="304" y="413" width="3" height="19" fill="#00ff00"/>
<rect x="305" y="414" width="1" height="17" fill="#000"/>
<rect x="309" y="398" width="1" height="25" fill="#00ff00"/>
<rect x="308" y="410" width="3" height="7" fill="#00ff00"/>
<rect x="309" y="411" width="1" height="5" fill="#fff"/>
<rect x="313" y="398" width="1" height="23" fill="#00ff00"/>
<rect x="312" y="398" width="3" height="23" fill="#00ff00"/>
<rect x="313" y="399" width="1" height="21" fill="#000"/>
<rect x="317" y="375" width="1" height="39" fill="#00ff00"/>
<rect x="316" y="398" width="3" height="7" fill="#00ff00"/>
<rect x="317" y="399" width="1" height="5" fill="#000"/>
<rect x="321" y="378" width="1" height="30" fill="#00ff00"/>
<rect x="320" y="386" width="3" height="19" fill="#00ff00"/>
<rect x="321" y="387" width="1" height="17" fill="#000"/>
<rect x="325" y="363" width="1" height="31" fill="#00ff00"/>
<rect x="324" y="372" width="3" height="19" fill="#00ff00"/>
<rect x="325" y="373" width="1" height="17" fill="#000"/>
<rect x="329" y="357" width="1" height="28" fill="#00ff00"/>
<rect x="328" y="366" width="3" height="10" fill="#00ff00"/>
<rect x="329" y="367" width="1" height="8" fill="#000"/>
<rect x="333" y="348" width="1" height="25" fill="#00ff00"/>
<rect x="332" y="354" width="3" height="16" fill="#00ff00"/>
<rect x="333" y="355" width="1" height="14" fill="#000"/>
<rect x="337" y="324" width="1" height="37" fill="#00ff00"/>
<rect x="336" y="336" width="3" height="22" fill="#00ff00"/>
<rect x="337" y="337" width="1" height="20" fill="#000"/>
<rect x="341" y="324" width="1" height="26" fill="#00ff00"/>
<rect x="340" y="340" width="3" height="9" fill="#00ff00"/>
<rect x="341" y="341" width="1" height="7" fill="#fff"/>
<rect x="345" y="339" width="1" height="13" fill="#00ff00"/>
<rect x="344" y="340" width="3" height="6" fill="#00ff00"/>
<rect x="345" y="341" width="1" height="4" fill="#fff"/>
<rect x="349" y="342" width="1" height="16" fill="#00ff00"/>
<rect x="348" y="348" width="3" height="5" fill="#00ff00"/>
<rect x="349" y="349" width="1" height="3" fill="#000"/>
<rect x="353" y="345" width="1" height="19" fill="#00ff00"/>
<rect x="352" y="351" width="3" height="4" fill="#00ff00"/>
<rect x="353" y="352" width="1" height="2" fill="#fff"/>
<rect x="357" y="342" width="1" height="22" fill="#00ff00"/>
<rect x="356" y="357" width="3" height="4" fill="#00ff00"/>
<rect x="357" y="358" width="1" height="2" fill="#000"/>
<rect x="361" y="351" width="1" height="40" fill="#00ff00"/>
<rect x="360" y="354" width="3" height="34" fill="#00ff00"/>
<rect x="361" y="355" width="1" height="32" fill="#fff"/>
<rect x="365" y="357" width="1" height="42" fill="#00ff00"/>
<rect x="364" y="384" width="3" height="15" fill="#00ff00"/>
<rect x="365" y="385" width="1" height="13" fill="#fff"/>
<rect x="369" y="369" width="1" height="22" fill="#00ff00"/>
<rect x="368" y="378" width="3" height="12" fill="#00ff00"/>
<rect x="369" y="379" width="1" height="10" fill="#000"/>
<rect x="373" y="372" width="1" height="16" fill="#00ff00"/>
<rect x="372" y="378" width="3" height="3" fill="#00ff00"/>
<rect x="373" y="379" width="1" height="1" fill="#000"/>
<rect x="377" y="372" width="1" height="36" fill="#00ff00"/>
<rect x="376" y="384" width="3" height="12" fill="#00ff00"/>
<rect x="377" y="385" width="1" height="10" fill="#fff"/>
<rect x="381" y="389" width="1" height="38" fill="#00ff00"/>
<rect x="380" y="398" width="3" height="19" fill="#00ff00"/>
<rect x="381" y="399" width="1" height="17" fill="#fff"/>
<rect x="385" y="404" width="1" height="22" fill="#00ff00"/>
<rect x="384" y="410" width="3" height="14" fill="#00ff00"/>
<rect x="385" y="411" width="1" height="12" fill="#000"/>
<rect x="389" y="398" width="1" height="19" fill="#00ff00"/>
<rect x="388" y="407" width="3" height="8" fill="#00ff00"/>
<rect x="389" y="408" width="1" height="6" fill="#fff"/>
<rect x="393" y="366" width="1" height="42" fill="#00ff00"/>
<rect x="392" y="381" width="3" height="24" fill="#00ff00"/>
<rect x="393" y="382" width="1" height="22" fill="#000"/>
<rect x="397" y="378" width="1" height="25" fill="#00ff00"/>
<rect x="396" y="383" width="3" height="1" fill="#00ff00"/>
<rect x="401" y="383" width="1" height="32" fill="#00ff00"/>
<rect x="400" y="390" width="3" height="9" fill="#00ff00"/>
<rect x="401" y="391" width="1" height="7" fill="#fff"/>
<rect x="405" y="390" width="1" height="27" fill="#00ff00"/>
<rect x="404" y="396" width="3" height="15" fill="#00ff00"/>
<rect x="405" y="397" width="1" height="13" fill="#fff"/>
<rect x="409" y="398" width="1" height="23" fill="#00ff00"/>
<rect x="408" y="410" width="3" height="5" fill="#00ff00"/>
<rect x="409" y="411" width="1" height="3" fill="#000"/>
<rect x="413" y="390" width="1" height="27" fill="#00ff00"/>
<rect x="412" y="404" width="3" height="13" fill="#00ff00"/>
<rect x="413" y="405" width="1" height="11" fill="#000"/>
<rect x="417" y="363" width="1" height="42" fill="#00ff00"/>
<rect x="416" y="364" width="3" height="26" fill="#00ff00"/>
<rect x="417" y="365" width="1" height="24" fill="#000"/>
<rect x="421" y="360" width="1" height="27" fill="#00ff00"/>
<rect x="420" y="360" width="3" height="13" fill="#00ff00"/>
<rect x="421" y="361" width="1" height="11" fill="#fff"/>
<rect x="425" y="333" width="1" height="46" fill="#00ff00"/>
<rect x="424" y="364" width="3" height="3" fill="#00ff00"/>
<rect x="425" y="365" width="1" height="1" fill="#fff"/>
<rect x="429" y="363" width="1" height="22" fill="#00ff00"/>
<rect x="428" y="369" width="3" height="13" fill="#00ff00"/>
<rect x="429" y="370" width="1" height="11" fill="#fff"/>
<rect x="433" y="375" width="1" height="28" fill="#00ff00"/>
<rect x="432" y="378" width="3" height="9" fill="#00ff00"/>
<rect x="433" y="379" width="1" height="7" fill="#fff"/>
<rect x="437" y="369" width="1" height="24" fill="#00ff00"/>
<rect x="436" y="372" width="3" height="18" fill="#00ff00"/>
<rect x="437" y="373" width="1" height="16" fill="#000"/>
<rect x="441" y="354" width="1" height="25" fill="#00ff00"/>
<rect x="440" y="358" width="3" height="18" fill="#00ff00"/>
<rect x="441" y="359" width="1" height="16" fill="#000"/>
<rect x="445" y="351" width="1" height="28" fill="#00ff00"/>
<rect x="444" y="360" width="3" height="16" fill="#00ff00"/>
<rect x="445" y="361" width="1" height="14" fill="#fff"/>
<rect x="449" y="316" width="1" height="63" fill="#00ff00"/>
<rect x="448" y="328" width="3" height="50" fill="#00ff00"/>
<rect x="449" y="329" width="1" height="48" fill="#000"/>
<rect x="453" y="304" width="1" height="81" fill="#00ff00"/>
<rect x="452" y="322" width="3" height="56" fill="#00ff00"/>
<rect x="453" y="323" width="1" height="54" fill="#fff"/>
<rect x="457" y="372" width="1" height="43" fill="#00ff00"/>
<rect x="456" y="375" width="3" height="3" fill="#00ff00"/>
<rect x="457" y="376" width="1" height="1" fill="#fff"/>
<rect x="461" y="301" width="1" height="81" fill="#00ff00"/>
<rect x="460" y="319" width="3" height="54" fill="#00ff00"/>
<rect x="461" y="320" width="1" height="52" fill="#000"/>
<rect x="465" y="304" width="1" height="28" fill="#00ff00"/>
<rect x="464" y="308" width="3" height="9" fill="#00ff00"/>
<rect x="465" y="309" width="1" height="7" fill="#000"/>
<rect x="469" y="274" width="1" height="35" fill="#00ff00"/>
<rect x="468" y="302" width="3" height="3" fill="#00ff00"/>
<rect x="469" y="303" width="1" height="1" fill="#000"/>
<rect x="473" y="298" width="1" height="31" fill="#00ff00"/>
<rect x="472" y="298" width="3" height="10" fill="#00ff00"/>
<rect x="473" y="299" width="1" height="8" fill="#fff"/>
<rect x="477" y="301" width="1" height="51" fill="#00ff00"/>
<rect x="476" y="313" width="3" height="21" fill="#00ff00"/>
<rect x="477" y="314" width="1" height="19" fill="#fff"/>
<rect x="481" y="319" width="1" height="33" fill="#00ff00"/>
<rect x="480" y="336" width="3" height="10" fill="#00ff00"/>
<rect x="481" y="337" width="1" height="8" fill="#fff"/>
<rect x="485" y="342" width="1" height="34" fill="#00ff00"/>
<rect x="484" y="358" width="3" height="1" fill="#00ff00"/>
<rect x="489" y="308" width="1" height="44" fill="#00ff00"/>
<rect x="488" y="319" width="3" height="33" fill="#00ff00"/>
<rect x="489" y="320" width="1" height="31" fill="#000"/>
<rect x="493" y="292" width="1" height="48" fill="#00ff00"/>
<rect x="492" y="308" width="3" height="3" fill="#00ff00"/>
<rect x="493" y="309" width="1" height="1" fill="#000"/>
<rect x="497" y="301" width="1" height="33" fill="#00ff00"/>
<rect x="496" y="304" width="3" height="25" fill="#00ff00"/>
<rect x="497" y="305" width="1" height="23" fill="#fff"/>
<rect x="501" y="322" width="1" height="24" fill="#00ff00"/>
<rect x="500" y="325" width="3" height="9" fill="#00ff00"/>
<rect x="501" y="326" width="1" height="7" fill="#fff"/>
<rect x="505" y="319" width="1" height="18" fill="#00ff00"/>
<rect x="504" y="331" width="3" height="1" fill="#00ff00"/>
<rect x="509" y="328" width="1" height="42" fill="#00ff00"/>
<rect x="508" y="333" width="3" height="19" fill="#00ff00"/>
<rect x="509" y="334" width="1" height="17" fill="#fff"/>
<rect x="513" y="349" width="1" height="38" fill="#00ff00"/>
<rect x="512" y="358" width="3" height="18" fill="#00ff00"/>
<rect x="513" y="359" width="1" height="16" fill="#fff"/>
<rect x="517" y="366" width="1" height="37" fill="#00ff00"/>
<rect x="516" y="381" width="3" height="1" fill="#00ff00"/>
<rect x="521" y="357" width="1" height="51" fill="#00ff00"/>
<rect x="520" y="378" width="3" height="12" fill="#00ff00"/>
<rect x="521" y="379" width="1" height="10" fill="#fff"/>
<rect x="525" y="381" width="1" height="30" fill="#00ff00"/>
<rect x="524" y="386" width="3" height="13" fill="#00ff00"/>
<rect x="525" y="387" width="1" height="11" fill="#fff"/>
<rect x="529" y="310" width="1" height="87" fill="#00ff00"/>
<rect x="528" y="310" width="3" height="80" fill="#00ff00"/>
<rect x="529" y="311" width="1" height="78" fill="#000"/>
<rect x="533" y="310" width="1" height="48" fill="#00ff00"/>
<rect x="532" y="313" width="3" height="39" fill="#00ff00"/>
<rect x="533" y="314" width="1" height="37" fill="#fff"/>
<rect x="537" y="333" width="1" height="49" fill="#00ff00"/>
<rect x="536" y="342" width="3" height="13" fill="#00ff00"/>
<rect x="537" y="343" width="1" height="11" fill="#000"/>
<rect x="541" y="339" width="1" height="37" fill="#00ff00"/>
<rect x="540" y="348" width="3" height="7" fill="#00ff00"/>
<rect x="541" y="349" width="1" height="5" fill="#fff"/>
<rect x="545" y="345" width="1" height="16" fill="#00ff00"/>
<rect x="544" y="360" width="3" height="1" fill="#00ff00"/>
<rect x="549" y="316" width="1" height="48" fill="#00ff00"/>
<rect x="548" y="336" width="3" height="22" fill="#00ff00"/>
<rect x="549" y="337" width="1" height="20" fill="#000"/>
<rect x="553" y="328" width="1" height="21" fill="#00ff00"/>
<rect x="552" y="331" width="3" height="12" fill="#00ff00"/>
<rect x="553" y="332" width="1" height="10" fill="#fff"/>
<rect x="557" y="333" width="1" height="16" fill="#00ff00"/>
<rect x="556" y="339" width="3" height="7" fill="#00ff00"/>
<rect x="557" y="340" width="1" height="5" fill="#000"/>
<rect x="561" y="336" width="1" height="54" fill="#00ff00"/>
<rect x="560" y="342" width="3" height="45" fill="#00ff00"/>
<rect x="561" y="343" width="1" height="43" fill="#fff"/>
<rect x="565" y="351" width="1" height="42" fill="#00ff00"/>
<rect x="564" y="360" width="3" height="33" fill="#00ff00"/>
<rect x="565" y="361" width="1" height="31" fill="#000"/>
<rect x="569" y="357" width="1" height="30" fill="#00ff00"/>
<rect x="568" y="358" width="3" height="6" fill="#00ff00"/>
<rect x="569" y="359" width="1" height="4" fill="#fff"/>
<rect x="573" y="357" width="1" height="25" fill="#00ff00"/>
<rect x="572" y="363" width="3" height="7" fill="#00ff00"/>
<rect x="573" y="364" width="1" height="5" fill="#000"/>
<rect x="577" y="354" width="1" height="54" fill="#00ff00"/>
<rect x="576" y="358" width="3" height="32" fill="#00ff00"/>
<rect x="577" y="359" width="1" height="30" fill="#fff"/>
<rect x="581" y="372" width="1" height="36" fill="#00ff00"/>
<rect x="580" y="381" width="3" height="6" fill="#00ff00"/>
<rect x="581" y="382" width="1" height="4" fill="#000"/>
<rect x="585" y="372" width="1" height="18" fill="#00ff00"/>
<rect x="584" y="378" width="3" height="6" fill="#00ff00"/>
<rect x="585" y="379" width="1" height="4" fill="#fff"/>
<rect x="589" y="345" width="1" height="45" fill="#00ff00"/>
<rect x="588" y="345" width="3" height="37" fill="#00ff00"/>
<rect x="589" y="346" width="1" height="35" fill="#000"/>
<rect x="593" y="331" width="1" height="27" fill="#00ff00"/>
<rect x="592" y="345" width="3" height="7" fill="#00ff00"/>
<rect x="593" y="346" width="1" height="5" fill="#000"/>
<rect x="597" y="333" width="1" height="22" fill="#00ff00"/>
<rect x="596" y="342" width="3" height="7" fill="#00ff00"/>
<rect x="597" y="343" width="1" height="5" fill="#000"/>
<rect x="601" y="319" width="1" height="27" fill="#00ff00"/>
<rect x="600" y="336" width="3" height="4" fill="#00ff00"/>
<rect x="601" y="337" width="1" height="2" fill="#000"/>
<rect x="605" y="304" width="1" height="51" fill="#00ff00"/>
<rect x="604" y="316" width="3" height="27" fill="#00ff00"/>
<rect x="605" y="317" width="1" height="25" fill="#000"/>
<rect x="609" y="301" width="1" height="22" fill="#00ff00"/>
<rect x="608" y="308" width="3" height="3" fill="#00ff00"/>
<rect x="609" y="309" width="1" height="1" fill="#000"/>
<rect x="613" y="308" width="1" height="47" fill="#00ff00"/>
<rect x="612" y="313" width="3" height="33" fill="#00ff00"/>
<rect x="613" y="314" width="1" height="31" fill="#fff"/>
<rect x="617" y="328" width="1" height="30" fill="#00ff00"/>
<rect x="616" y="336" width="3" height="7" fill="#00ff00"/>
<rect x="617" y="337" width="1" height="5" fill="#000"/>
<rect x="621" y="331" width="1" height="21" fill="#00ff00"/>
<rect x="620" y="331" width="3" height="18" fill="#00ff00"/>
<rect x="621" y="332" width="1" height="16" fill="#fff"/>
<rect x="625" y="339" width="1" height="19" fill="#00ff00"/>
<rect x="624" y="345" width="3" height="1" fill="#00ff00"/>
<rect x="629" y="331" width="1" height="21" fill="#00ff00"/>
<rect x="628" y="336" width="3" height="13" fill="#00ff00"/>
<rect x="629" y="337" width="1" height="11" fill="#000"/>
<rect x="633" y="336" width="1" height="19" fill="#00ff00"/>
<rect x="632" y="339" width="3" height="13" fill="#00ff00"/>
<rect x="633" y="340" width="1" height="11" fill="#fff"/>
<rect x="637" y="333" width="1" height="26" fill="#00ff00"/>
<rect x="636" y="336" width="3" height="19" fill="#00ff00"/>
<rect x="637" y="337" width="1" height="17" fill="#000"/>
<rect x="641" y="336" width="1" height="13" fill="#00ff00"/>
<rect x="640" y="339" width="3" height="1" fill="#00ff00"/>
<rect x="645" y="307" width="1" height="36" fill="#00ff00"/>
<rect x="644" y="318" width="3" height="19" fill="#00ff00"/>
<rect x="645" y="319" width="1" height="17" fill="#000"/>
<rect x="649" y="286" width="1" height="39" fill="#00ff00"/>
<rect x="648" y="307" width="3" height="15" fill="#00ff00"/>
<rect x="649" y="308" width="1" height="13" fill="#000"/>
<rect x="653" y="298" width="1" height="45" fill="#00ff00"/>
<rect x="652" y="304" width="3" height="36" fill="#00ff00"/>
<rect x="653" y="305" width="1" height="34" fill="#fff"/>
<rect x="657" y="327" width="1" height="38" fill="#00ff00"/>
<rect x="656" y="336" width="3" height="23" fill="#00ff00"/>
<rect x="657" y="337" width="1" height="21" fill="#fff"/>
<rect x="661" y="336" width="1" height="29" fill="#00ff00"/>
<rect x="660" y="352" width="3" height="1" fill="#00ff00"/>
<rect x="665" y="352" width="1" height="27" fill="#00ff00"/>
<rect x="664" y="354" width="3" height="13" fill="#00ff00"/>
<rect x="665" y="355" width="1" height="11" fill="#fff"/>
<rect x="669" y="354" width="1" height="25" fill="#00ff00"/>
<rect x="668" y="358" width="3" height="12" fill="#00ff00"/>
<rect x="669" y="359" width="1" height="10" fill="#000"/>
<rect x="673" y="339" width="1" height="31" fill="#00ff00"/>
<rect x="672" y="351" width="3" height="14" fill="#00ff00"/>
<rect x="673" y="352" width="1" height="12" fill="#000"/>
<rect x="677" y="345" width="1" height="20" fill="#00ff00"/>
<rect x="676" y="349" width="3" height="12" fill="#00ff00"/>
<rect x="677" y="350" width="1" height="10" fill="#fff"/>
<rect x="681" y="354" width="1" height="84" fill="#00ff00"/>
<rect x="680" y="358" width="3" height="80" fill="#00ff00"/>
<rect x="681" y="359" width="1" height="78" fill="#fff"/>
<rect x="685" y="419" width="1" height="24" fill="#00ff00"/>
<rect x="684" y="428" width="3" height="4" fill="#00ff00"/>
<rect x="685" y="429" width="1" height="2" fill="#fff"/>
<rect x="689" y="428" width="1" height="49" fill="#00ff00"/>
<rect x="688" y="434" width="3" height="21" fill="#00ff00"/>
<rect x="689" y="435" width="1" height="19" fill="#fff"/>
<rect x="693" y="395" width="1" height="60" fill="#00ff00"/>
<rect x="692" y="416" width="3" height="33" fill="#00ff00"/>
<rect x="693" y="417" width="1" height="31" fill="#000"/>
<rect x="697" y="413" width="1" height="61" fill="#00ff00"/>
<rect x="696" y="413" width="3" height="42" fill="#00ff00"/>
<rect x="697" y="414" width="1" height="40" fill="#fff"/>
<rect x="701" y="425" width="1" height="37" fill="#00ff00"/>
<rect x="700" y="445" width="3" height="13" fill="#00ff00"/>
<rect x="701" y="446" width="1" height="11" fill="#000"/>
<rect x="705" y="419" width="1" height="39" fill="#00ff00"/>
<rect x="704" y="442" width="3" height="7" fill="#00ff00"/>
<rect x="705" y="443" width="1" height="5" fill="#fff"/>
<rect x="709" y="451" width="1" height="32" fill="#00ff00"/>
<rect x="708" y="457" width="3" height="20" fill="#00ff00"/>
<rect x="709" y="458" width="1" height="18" fill="#fff"/>
<rect x="713" y="445" width="1" height="44" fill="#00ff00"/>
<rect x="712" y="478" width="3" height="5" fill="#00ff00"/>
<rect x="713" y="479" width="1" height="3" fill="#fff"/>
<rect x="717" y="467" width="1" height="57" fill="#00ff00"/>
<rect x="716" y="479" width="3" height="35" fill="#00ff00"/>
<rect x="717" y="480" width="1" height="33" fill="#fff"/>
<rect x="721" y="493" width="1" height="31" fill="#00ff00"/>
<rect x="720" y="493" width="3" height="30" fill="#00ff00"/>
<rect x="721" y="494" width="1" height="28" fill="#000"/>
<rect x="725" y="487" width="1" height="43" fill="#00ff00"/>
<rect x="724" y="499" width="3" height="4" fill="#00ff00"/>
<rect x="725" y="500" width="1" height="2" fill="#fff"/>
<rect x="729" y="475" width="1" height="33" fill="#00ff00"/>
<rect x="728" y="488" width="3" height="11" fill="#00ff00"/>
<rect x="729" y="489" width="1" height="9" fill="#000"/>
<rect x="733" y="475" width="1" height="46" fill="#00ff00"/>
<rect x="732" y="482" width="3" height="32" fill="#00ff00"/>
<rect x="733" y="483" width="1" height="30" fill="#fff"/>
<rect x="737" y="498" width="1" height="38" fill="#00ff00"/>
<rect x="736" y="511" width="3" height="12" fill="#00ff00"/>
<rect x="737" y="512" width="1" height="10" fill="#fff"/>
<rect x="741" y="498" width="1" height="44" fill="#00ff00"/>
<rect x="740" y="505" width="3" height="9" fill="#00ff00"/>
<rect x="741" y="506" width="1" height="7" fill="#000"/>
<rect x="745" y="498" width="1" height="61" fill="#00ff00"/>
<rect x="744" y="507" width="3" height="16" fill="#00ff00"/>
<rect x="745" y="508" width="1" height="14" fill="#fff"/>
<rect x="749" y="478" width="1" height="52" fill="#00ff00"/>
<rect x="748" y="507" width="3" height="22" fill="#00ff00"/>
<rect x="749" y="508" width="1" height="20" fill="#000"/>
<rect x="753" y="495" width="1" height="59" fill="#00ff00"/>
<rect x="752" y="511" width="3" height="31" fill="#00ff00"/>
<rect x="753" y="512" width="1" height="29" fill="#fff"/>
<rect x="757" y="510" width="1" height="40" fill="#00ff00"/>
<rect x="756" y="516" width="3" height="31" fill="#00ff00"/>
<rect x="757" y="517" width="1" height="29" fill="#000"/>
<rect x="761" y="481" width="1" height="36" fill="#00ff00"/>
<rect x="760" y="502" width="3" height="12" fill="#00ff00"/>
<rect x="761" y="503" width="1" height="10" fill="#000"/>
<rect x="765" y="499" width="1" height="48" fill="#00ff00"/>
<rect x="764" y="507" width="3" height="35" fill="#00ff00"/>
<rect x="765" y="508" width="1" height="33" fill="#fff"/>
<rect x="769" y="519" width="1" height="49" fill="#00ff00"/>
<rect x="768" y="543" width="3" height="11" fill="#00ff00"/>
<rect x="769" y="544" width="1" height="9" fill="#fff"/>
<rect x="773" y="526" width="1" height="42" fill="#00ff00"/>
<rect x="772" y="537" width="3" height="22" fill="#00ff00"/>
<rect x="773" y="538" width="1" height="20" fill="#000"/>
<rect x="777" y="528" width="1" height="43" fill="#00ff00"/>
<rect x="776" y="534" width="3" height="22" fill="#00ff00"/>
<rect x="777" y="535" width="1" height="20" fill="#fff"/>
<rect x="781" y="549" width="1" height="49" fill="#00ff00"/>
<rect x="780" y="553" width="3" height="40" fill="#00ff00"/>
<rect x="781" y="554" width="1" height="38" fill="#fff"/>
<rect x="785" y="578" width="1" height="17" fill="#00ff00"/>
<rect x="784" y="587" width="3" height="7" fill="#00ff00"/>
<rect x="785" y="588" width="1" height="5" fill="#fff"/>
<rect x="9" y="593" width="981" height="1" fill="#7d8b9c"/>
<rect x="991" y="599" width="2" height="1" fill="#fff"/>
<rect x="991" y="555" width="2" height="1" fill="#fff"/>
<rect x="991" y="510" width="2" height="1" fill="#fff"/>
<rect x="991" y="466" width="2" height="1" fill="#fff"/>
<rect x="991" y="422" width="2" height="1" fill="#fff"/>
<rect x="991" y="378" width="2" height="1" fill="#fff"/>
<rect x="991" y="333" width="2" height="1" fill="#fff"/>
<rect x="991" y="289" width="2" height="1" fill="#fff"/>
<rect x="991" y="245" width="2" height="1" fill="#fff"/>
<rect x="991" y="201" width="2" height="1" fill="#fff"/>
<rect x="991" y="156" width="2" height="1" fill="#fff"/>
<rect x="991" y="112" width="2" height="1" fill="#fff"/>
<text x="996" y="602.5" class="ax">1.1635</text>
<text x="996" y="558.5" class="ax">1.1650</text>
<text x="996" y="513.5" class="ax">1.1665</text>
<text x="996" y="469.5" class="ax">1.1680</text>
<text x="996" y="425.5" class="ax">1.1695</text>
<text x="996" y="381.5" class="ax">1.1710</text>
<text x="996" y="336.5" class="ax">1.1725</text>
<text x="996" y="292.5" class="ax">1.1740</text>
<text x="996" y="248.5" class="ax">1.1755</text>
<text x="996" y="204.5" class="ax">1.1770</text>
<text x="996" y="159.5" class="ax">1.1785</text>
<text x="996" y="115.5" class="ax">1.1800</text>
<rect x="993" y="587" width="34" height="11" fill="#fff"/>
<text x="996" y="596" class="ax" fill="#000" style="fill:#000;stroke:#000">1.1637</text>
<rect x="9" y="615" width="1" height="3" fill="#fff"/>
<text x="8" y="627" class="ax" style="font-size:9.2px">12 Dec 2008</text>
<rect x="73" y="615" width="1" height="3" fill="#fff"/>
<text x="72" y="627" class="ax" style="font-size:9.2px">15 Dec 01:05</text>
<rect x="137" y="615" width="1" height="3" fill="#fff"/>
<text x="136" y="627" class="ax" style="font-size:9.2px">15 Dec 02:25</text>
<rect x="201" y="615" width="1" height="3" fill="#fff"/>
<text x="200" y="627" class="ax" style="font-size:9.2px">15 Dec 03:45</text>
<rect x="265" y="615" width="1" height="3" fill="#fff"/>
<text x="264" y="627" class="ax" style="font-size:9.2px">15 Dec 05:05</text>
<rect x="329" y="615" width="1" height="3" fill="#fff"/>
<text x="328" y="627" class="ax" style="font-size:9.2px">15 Dec 06:25</text>
<rect x="393" y="615" width="1" height="3" fill="#fff"/>
<text x="392" y="627" class="ax" style="font-size:9.2px">15 Dec 07:45</text>
<rect x="457" y="615" width="1" height="3" fill="#fff"/>
<text x="456" y="627" class="ax" style="font-size:9.2px">15 Dec 09:05</text>
<rect x="521" y="615" width="1" height="3" fill="#fff"/>
<text x="520" y="627" class="ax" style="font-size:9.2px">15 Dec 10:25</text>
<rect x="585" y="615" width="1" height="3" fill="#fff"/>
<text x="584" y="627" class="ax" style="font-size:9.2px">15 Dec 11:45</text>
<rect x="649" y="615" width="1" height="3" fill="#fff"/>
<text x="648" y="627" class="ax" style="font-size:9.2px">15 Dec 13:05</text>
<rect x="713" y="615" width="1" height="3" fill="#fff"/>
<text x="712" y="627" class="ax" style="font-size:9.2px">15 Dec 14:25</text>
<rect x="777" y="615" width="1" height="3" fill="#fff"/>
<text x="776" y="627" class="ax" style="font-size:9.2px">15 Dec 15:45</text>
<rect x="9" y="84" width="189" height="12" fill="#000"/>
<text x="12.5" y="92.5" class="ax" xml:space="preserve" style="white-space:pre">USDCHF,M5  1.1639 1.1642 1.1637 1.1637</text>
<polygon points="788,82 798,82 793,87" fill="#8a97a8"/>
</svg>
<div id="term"></div>
<svg class="abs" style="left:8px;top:640px" width="7" height="6" viewBox="0 0 7 6"><path d="M0.5 0.5 L6 5.5 M6 0.5 L0.5 5.5" stroke="#000" stroke-width="1.6" fill="none"/></svg>
<div class="abs" style="left:5px;top:651px;width:13px;height:104px;background:linear-gradient(#a3baec,#7f9fe4 60%,#7496e0);"></div>
<div class="abs" style="left:5px;top:727px;width:13px;height:26px;font-size:12px;line-height:13px;color:#c4d3f5;writing-mode:vertical-rl;transform:rotate(180deg);white-space:nowrap;overflow:hidden">终端</div>
<div class="abs" style="left:5px;top:632px;width:1024px;height:2px;background:#fff"></div>
<div class="abs" style="left:19px;top:637px;width:1009px;height:97px;background:#fff"></div>
<div class="abs" style="left:19px;top:637px;width:1009px;height:18px;background:#ece9d8;border-top:1px solid #a5a294;border-left:1px solid #a5a294;box-sizing:border-box"></div>
<div class="abs" style="left:20px;top:638px;width:1px;height:17px;background:#fff"></div>
<div class="abs" style="left:20px;top:638px;width:1008px;height:1px;background:#f6f5ee"></div>
<div class="abs" style="left:19px;top:655px;width:1009px;height:1px;background:#e0dccb"></div>
<div class="abs" style="left:19px;top:656px;width:1009px;height:1px;background:#d2cebd"></div>
<div class="abs" style="left:19px;top:657px;width:1009px;height:1px;background:#c3bfae"></div>
<div class="abs" style="left:19px;top:655px;width:1px;height:79px;background:#a5a294"></div>
<div class="abs" style="left:20px;top:658px;width:991px;height:20px;background:#fff"></div>
<div class="abs" style="left:20px;top:678px;width:991px;height:20px;background:#316ac5"></div>
<div class="abs" style="left:20px;top:698px;width:991px;height:20px;background:#fff"></div>
<div class="abs" style="left:20px;top:718px;width:991px;height:16px;background:#ebebeb"></div>
<div class="abs" style="left:20px;top:717px;width:991px;height:1px;background:#dadada"></div>
<div class="abs" style="left:116px;top:658px;width:1px;height:76px;background:#cfcfcf"></div>
<div class="abs" style="left:282px;top:658px;width:1px;height:76px;background:#cfcfcf"></div>
<div class="abs" style="left:350px;top:658px;width:1px;height:76px;background:#cfcfcf"></div>
<div class="abs" style="left:402px;top:658px;width:1px;height:76px;background:#cfcfcf"></div>
<div class="abs" style="left:469px;top:658px;width:1px;height:76px;background:#cfcfcf"></div>
<div class="abs" style="left:545px;top:658px;width:1px;height:76px;background:#cfcfcf"></div>
<div class="abs" style="left:620px;top:658px;width:1px;height:76px;background:#cfcfcf"></div>
<div class="abs" style="left:695px;top:658px;width:1px;height:76px;background:#cfcfcf"></div>
<div class="abs" style="left:769px;top:658px;width:1px;height:76px;background:#cfcfcf"></div>
<div class="abs" style="left:845px;top:658px;width:1px;height:76px;background:#cfcfcf"></div>
<div class="abs" style="left:920px;top:658px;width:1px;height:76px;background:#cfcfcf"></div>
<div class="abs" style="left:115px;top:641px;width:1px;height:13px;background:#b5b2a3"></div><div class="abs" style="left:116px;top:641px;width:1px;height:13px;background:#fff"></div>
<div class="abs" style="left:281px;top:641px;width:1px;height:13px;background:#b5b2a3"></div><div class="abs" style="left:282px;top:641px;width:1px;height:13px;background:#fff"></div>
<div class="abs" style="left:349px;top:641px;width:1px;height:13px;background:#b5b2a3"></div><div class="abs" style="left:350px;top:641px;width:1px;height:13px;background:#fff"></div>
<div class="abs" style="left:401px;top:641px;width:1px;height:13px;background:#b5b2a3"></div><div class="abs" style="left:402px;top:641px;width:1px;height:13px;background:#fff"></div>
<div class="abs" style="left:468px;top:641px;width:1px;height:13px;background:#b5b2a3"></div><div class="abs" style="left:469px;top:641px;width:1px;height:13px;background:#fff"></div>
<div class="abs" style="left:544px;top:641px;width:1px;height:13px;background:#b5b2a3"></div><div class="abs" style="left:545px;top:641px;width:1px;height:13px;background:#fff"></div>
<div class="abs" style="left:619px;top:641px;width:1px;height:13px;background:#b5b2a3"></div><div class="abs" style="left:620px;top:641px;width:1px;height:13px;background:#fff"></div>
<div class="abs" style="left:694px;top:641px;width:1px;height:13px;background:#b5b2a3"></div><div class="abs" style="left:695px;top:641px;width:1px;height:13px;background:#fff"></div>
<div class="abs" style="left:768px;top:641px;width:1px;height:13px;background:#b5b2a3"></div><div class="abs" style="left:769px;top:641px;width:1px;height:13px;background:#fff"></div>
<div class="abs" style="left:844px;top:641px;width:1px;height:13px;background:#b5b2a3"></div><div class="abs" style="left:845px;top:641px;width:1px;height:13px;background:#fff"></div>
<div class="abs" style="left:919px;top:641px;width:1px;height:13px;background:#b5b2a3"></div><div class="abs" style="left:920px;top:641px;width:1px;height:13px;background:#fff"></div>
<div class="abs" style="left:1009px;top:641px;width:1px;height:13px;background:#b5b2a3"></div><div class="abs" style="left:1010px;top:641px;width:1px;height:13px;background:#fff"></div>
<div class="th" style="left:32px;text-align:left">定单</div>
<svg class="abs" style="left:65px;top:644px" width="10" height="9" viewBox="0 0 10 9"><path d="M5 1 L9 8 L1 8 Z" fill="#f6f5ee" stroke="#b5b2a3" stroke-width="1"/><path d="M5 1 L9 8 L1 8" fill="none" stroke="#fff" stroke-width="1"/><path d="M5 1 L1 8" fill="none" stroke="#aca899" stroke-width="1"/></svg>
<div class="th" style="left:116px;width:166px">时间</div>
<div class="th" style="left:282px;width:68px">类型</div>
<div class="th" style="left:350px;width:52px">手数</div>
<div class="th" style="left:402px;width:67px">商品</div>
<div class="th" style="left:469px;width:76px">价位</div>
<div class="th" style="left:545px;width:75px">止损</div>
<div class="th" style="left:620px;width:75px">获利</div>
<div class="th" style="left:695px;width:74px">价位</div>
<div class="th" style="left:769px;width:76px">佣金</div>
<div class="th" style="left:845px;width:75px">利息</div>
<div class="th" style="left:920px;width:90px">获利</div>
<div class="td" style="left:116px;top:658px;width:166px;color:#000;padding-right:2px">2008.12.15 06:01</div>
<div class="td" style="left:282px;top:658px;width:68px;color:#000;padding-right:2px">sell</div>
<div class="td" style="left:350px;top:658px;width:52px;color:#000;padding-right:2px">1.00</div>
<div class="td" style="left:402px;top:658px;width:67px;color:#000;padding-right:2px">usdchf</div>
<div class="td" style="left:469px;top:658px;width:76px;color:#000;padding-right:2px">1.1700</div>
<div class="td" style="left:545px;top:658px;width:75px;color:#000;padding-right:2px">1.1800</div>
<div class="td" style="left:620px;top:658px;width:75px;color:#000;padding-right:2px">1.1590</div>
<div class="td" style="left:695px;top:658px;width:74px;color:#000;padding-right:2px">1.1645</div>
<div class="td" style="left:769px;top:658px;width:76px;color:#000;padding-right:2px">0.00</div>
<div class="td" style="left:845px;top:658px;width:75px;color:#000;padding-right:2px">0.00</div>
<div class="td" style="left:920px;top:658px;width:90px;color:#000;padding-right:4px">55</div>
<svg class="abs" style="left:23px;top:660px" width="16" height="17" viewBox="0 0 16 17"><path d="M1.5 1.5 H7.5 L11.5 5.5 V13.5 H1.5 Z" fill="#fff" stroke="#7a7a7a" stroke-width="1"/><path d="M7.5 1.5 V5.5 H11.5" fill="#e8e8e8" stroke="#7a7a7a" stroke-width="1"/><circle cx="10.5" cy="12" r="3.2" fill="#e8461c" stroke="#a82a08" stroke-width="0.8"/><circle cx="9.6" cy="11" r="1" fill="#ff9a70"/></svg>
<div class="td" style="left:116px;top:678px;width:166px;color:#fff;padding-right:2px">2008.12.15 06:46</div>
<div class="td" style="left:282px;top:678px;width:68px;color:#fff;padding-right:2px">sell</div>
<div class="td" style="left:350px;top:678px;width:52px;color:#fff;padding-right:2px">1.00</div>
<div class="td" style="left:402px;top:678px;width:67px;color:#fff;padding-right:2px">usdchf</div>
<div class="td" style="left:469px;top:678px;width:76px;color:#fff;padding-right:2px">1.1719</div>
<div class="td" style="left:545px;top:678px;width:75px;color:#fff;padding-right:2px">1.1800</div>
<div class="td" style="left:620px;top:678px;width:75px;color:#fff;padding-right:2px">1.1580</div>
<div class="td" style="left:695px;top:678px;width:74px;color:#fff;padding-right:2px">1.1645</div>
<div class="td" style="left:769px;top:678px;width:76px;color:#fff;padding-right:2px">0.00</div>
<div class="td" style="left:845px;top:678px;width:75px;color:#fff;padding-right:2px">0.00</div>
<div class="td" style="left:920px;top:678px;width:90px;color:#fff;padding-right:4px">74</div>
<svg class="abs" style="left:23px;top:680px" width="16" height="17" viewBox="0 0 16 17"><path d="M1.5 1.5 H7.5 L11.5 5.5 V13.5 H1.5 Z" fill="#fff" stroke="#7a7a7a" stroke-width="1"/><path d="M7.5 1.5 V5.5 H11.5" fill="#e8e8e8" stroke="#7a7a7a" stroke-width="1"/><circle cx="10.5" cy="12" r="3.2" fill="#e8461c" stroke="#a82a08" stroke-width="0.8"/><circle cx="9.6" cy="11" r="1" fill="#ff9a70"/></svg>
<div class="td" style="left:116px;top:698px;width:166px;color:#000;padding-right:2px">2008.12.15 09:23</div>
<div class="td" style="left:282px;top:698px;width:68px;color:#000;padding-right:2px">sell</div>
<div class="td" style="left:350px;top:698px;width:52px;color:#000;padding-right:2px">1.00</div>
<div class="td" style="left:402px;top:698px;width:67px;color:#000;padding-right:2px">usdchf</div>
<div class="td" style="left:469px;top:698px;width:76px;color:#000;padding-right:2px">1.1745</div>
<div class="td" style="left:545px;top:698px;width:75px;color:#000;padding-right:2px">1.1800</div>
<div class="td" style="left:620px;top:698px;width:75px;color:#000;padding-right:2px">1.1590</div>
<div class="td" style="left:695px;top:698px;width:74px;color:#000;padding-right:2px">1.1645</div>
<div class="td" style="left:769px;top:698px;width:76px;color:#000;padding-right:2px">0.00</div>
<div class="td" style="left:845px;top:698px;width:75px;color:#000;padding-right:2px">0.00</div>
<div class="td" style="left:920px;top:698px;width:90px;color:#000;padding-right:4px">100</div>
<svg class="abs" style="left:23px;top:700px" width="16" height="17" viewBox="0 0 16 17"><path d="M1.5 1.5 H7.5 L11.5 5.5 V13.5 H1.5 Z" fill="#fff" stroke="#7a7a7a" stroke-width="1"/><path d="M7.5 1.5 V5.5 H11.5" fill="#e8e8e8" stroke="#7a7a7a" stroke-width="1"/><circle cx="10.5" cy="12" r="3.2" fill="#e8461c" stroke="#a82a08" stroke-width="0.8"/><circle cx="9.6" cy="11" r="1" fill="#ff9a70"/></svg>
<div class="td" style="left:116px;top:718px;width:166px;color:#000;padding-right:2px">2008.12.15 15:43</div>
<div class="td" style="left:282px;top:718px;width:68px;color:#000;padding-right:2px">sell</div>
<div class="td" style="left:350px;top:718px;width:52px;color:#000;padding-right:2px">4.00</div>
<div class="td" style="left:402px;top:718px;width:67px;color:#000;padding-right:2px">gbpusd</div>
<div class="td" style="left:469px;top:718px;width:76px;color:#000;padding-right:2px">1.5292</div>
<div class="td" style="left:545px;top:718px;width:75px;color:#000;padding-right:2px">1.5322</div>
<div class="td" style="left:620px;top:718px;width:75px;color:#000;padding-right:2px">0.0000</div>
<div class="td" style="left:695px;top:718px;width:74px;color:#000;padding-right:2px">1.5280</div>
<div class="td" style="left:769px;top:718px;width:76px;color:#000;padding-right:2px">0.00</div>
<div class="td" style="left:845px;top:718px;width:75px;color:#000;padding-right:2px">0.00</div>
<div class="td" style="left:920px;top:718px;width:90px;color:#000;padding-right:4px">12</div>
<svg class="abs" style="left:23px;top:720px" width="16" height="17" viewBox="0 0 16 17"><path d="M1.5 1.5 H7.5 L11.5 5.5 V13.5 H1.5 Z" fill="#fff" stroke="#7a7a7a" stroke-width="1"/><path d="M7.5 1.5 V5.5 H11.5" fill="#e8e8e8" stroke="#7a7a7a" stroke-width="1"/><circle cx="10.5" cy="12" r="3.2" fill="#e8461c" stroke="#a82a08" stroke-width="0.8"/><circle cx="9.6" cy="11" r="1" fill="#ff9a70"/></svg>
<svg class="abs" style="left:0;top:0;pointer-events:none" width="1036" height="763" viewBox="0 0 1036 763"><clipPath id="tc"><rect x="19" y="657" width="992" height="77"/></clipPath><g clip-path="url(#tc)"><path d="M46.5 668 C55 667.5,70 668.5,78 667 L82.5 668.5" fill="none" stroke="#000" stroke-width="7" stroke-linecap="round" stroke-linejoin="round"/><path d="M48 690.5 C60 690,75 690,86 687.5" fill="none" stroke="#000" stroke-width="7.5" stroke-linecap="round" stroke-linejoin="round"/><path d="M43.5 708 C55 707.5,75 707.5,88 708" fill="none" stroke="#000" stroke-width="7" stroke-linecap="round" stroke-linejoin="round"/><path d="M42 723.5 C46 727,50 726.5,60 726.5 L85 727.5" fill="none" stroke="#000" stroke-width="6.5" stroke-linecap="round" stroke-linejoin="round"/></g></svg>
<div class="abs" style="left:1011px;top:638px;width:17px;height:96px;background:#f6f5f0"></div>
<svg class="abs" style="left:1011px;top:638px" width="17" height="16" viewBox="0 0 16 16" preserveAspectRatio="none"><rect x="0.5" y="0.5" width="15" height="15" rx="2.5" fill="#c6d6fb" stroke="#fff"/><rect x="1.5" y="1.5" width="13" height="13" rx="2" fill="#c2d3fa" stroke="#b0c4f0" stroke-width="1"/><path d="M4 9.5 L8 5.5 L12 9.5" fill="none" stroke="#4d6185" stroke-width="2.2"/></svg>
<svg class="abs" style="left:1011px;top:718px" width="17" height="16" viewBox="0 0 16 16" preserveAspectRatio="none"><rect x="0.5" y="0.5" width="15" height="15" rx="2.5" fill="#c6d6fb" stroke="#fff"/><rect x="1.5" y="1.5" width="13" height="13" rx="2" fill="#c2d3fa" stroke="#b0c4f0" stroke-width="1"/><path d="M4 5.5 L8 9.5 L12 5.5" fill="none" stroke="#4d6185" stroke-width="2.2"/></svg>
<svg class="abs" style="left:1011px;top:655px" width="17" height="38" viewBox="0 0 16 38" preserveAspectRatio="none"><rect x="0.5" y="0.5" width="15" height="37" rx="2.5" fill="#c9d9fc" stroke="#fff"/><rect x="1.5" y="1.5" width="13" height="35" rx="2" fill="#c6d6fb" stroke="#98b1e4" stroke-width="1"/><path d="M5 15.5 H11 M5 17.5 H11 M5 19.5 H11 M5 21.5 H11" stroke="#eef4fe" stroke-width="1"/><path d="M5 16.5 H11 M5 18.5 H11 M5 20.5 H11 M5 22.5 H11" stroke="#8caae6" stroke-width="1"/></svg>
<div class="abs" style="left:19px;top:734px;width:1009px;height:1px;background:#000"></div>
<div class="abs" style="left:22px;top:734px;width:44px;height:18px;background:#fff;border:1px solid #000;border-top:none;border-right:2px solid #000;border-bottom:2px solid #000;box-sizing:border-box"></div>
<div class="tab" style="left:31px;color:#000">交易</div>
<div class="tab" style="left:75px">账户历史</div>
<div class="tab" style="left:144px">警报</div>
<div class="tab" style="left:188px">邮箱</div>
<div class="tab" style="left:233px">日志</div>
<div class="abs" style="left:134px;top:739px;width:1px;height:12px;background:#7a786c"></div>
<div class="abs" style="left:178px;top:739px;width:1px;height:12px;background:#7a786c"></div>
<div class="abs" style="left:222px;top:739px;width:1px;height:12px;background:#7a786c"></div>
<div class="abs" style="left:266px;top:739px;width:1px;height:12px;background:#7a786c"></div>
<div class="abs" style="left:5px;top:758px;width:1024px;height:5px;background:linear-gradient(#3a80f0,#245edb 50%)"></div>
<div class="abs" style="left:970px;top:758px;width:59px;height:5px;background:linear-gradient(#1cb0f8,#1290e8 60%);border-left:1px solid #0a3a8a"></div>
<div class="abs" style="left:5px;top:758px;width:94px;height:5px;background:linear-gradient(#5eb05e,#3c973c);border-top-right-radius:6px"></div>
</body>
</html>
